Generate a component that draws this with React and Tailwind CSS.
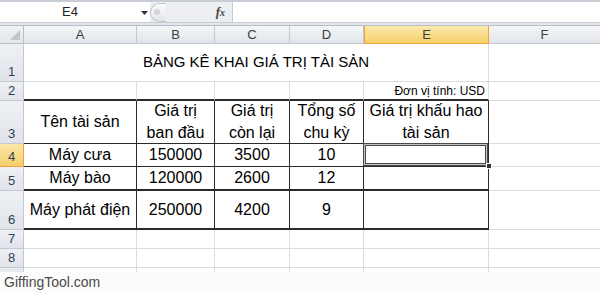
import React from 'react';

const grid = 'border-r border-b border-[#dadcdf]';
const colHead =
  'flex items-center justify-center border-r border-b border-[#c3c8cf] bg-gradient-to-b from-[#f4f6f8] to-[#e1e5ea] text-[13px] text-[#3c3c3c]';
const rowHead =
  'flex items-end justify-center pb-[1px] border-r border-b border-[#c3c8cf] bg-gradient-to-b from-[#eef1f4] to-[#e0e4e9] text-[13px] leading-[16px] text-[#30405a]';
const rowHeadSel =
  'flex items-end justify-center pb-[1px] border-r border-b border-[#f0a23e] bg-gradient-to-b from-[#fbe8aa] to-[#f6cf68] text-[13px] leading-[16px] text-[#30405a]';

function FormulaBar() {
  return (
    <div className="flex h-[23px] border-t-2 border-b border-[#c8cdd5]">
      <div className="relative flex w-[150px] items-center bg-white">
        <span className="w-[140px] text-center text-[13px] text-[#222]">E4</span>
        <svg width="7" height="4" viewBox="0 0 7 4" className="absolute left-[141px] top-[9px]">
          <path d="M0 0h7L3.5 4z" fill="#333" />
        </svg>
      </div>
      <div className="flex w-[82px] items-center bg-[#eceef1]">
        <div className="flex h-[19px] w-[16px] items-center justify-start rounded-l-full border border-r-0 border-[#c2c6cc] bg-gradient-to-b from-[#fafbfc] to-[#e3e6ea] pl-[3px]">
          <div className="h-[6px] w-[6px] rounded-full bg-[#d3d6da]" />
        </div>
        <span className="ml-auto mr-[7px] font-['Liberation_Serif',serif] text-[13px] font-bold italic text-[#444]">
          f<span className="text-[10px]">x</span>
        </span>
      </div>
      <div className="flex-1 border-l border-[#c8cdd5] bg-white" />
    </div>
  );
}

export default function App() {
  return (
    <div className="h-[293px] w-[600px] overflow-hidden bg-white font-['Liberation_Sans',Arial,sans-serif]">
      <FormulaBar />
      <div className="h-[3px] border-b border-[#b8bec7] bg-[#e3e7ec]" />

      <div className="grid grid-cols-[24px_113px_78px_75px_74px_125px_111px] grid-rows-[18px_38px_19px_43px_23px_24px_39px_19px_19px_4px] text-[16px] text-black">
        {/* header row */}
        <div className="relative border-r border-b border-[#b8bdc4] bg-gradient-to-b from-[#f1f3f5] to-[#e2e5e9]">
          <svg width="10" height="10" viewBox="0 0 10 10" className="absolute bottom-[3px] right-[3px]">
            <path d="M10 0v10H0z" fill="#c3c7cc" />
          </svg>
        </div>
        <div className={colHead}>A</div>
        <div className={colHead}>B</div>
        <div className={colHead}>C</div>
        <div className={colHead}>D</div>
        <div className="flex items-center justify-center border-x border-b border-[#f0a23e] bg-gradient-to-b from-[#fce9ac] to-[#f7d166] text-[13px] text-[#3c3c3c]">
          E
        </div>
        <div className="flex items-center justify-center border-b border-[#c3c8cf] bg-gradient-to-b from-[#f4f6f8] to-[#e1e5ea] text-[13px] text-[#3c3c3c]">
          F
        </div>

        {/* row 1 */}
        <div className={rowHead}>1</div>
        <div className={`col-span-5 flex items-center justify-center text-[15px] ${grid}`}>
          BẢNG KÊ KHAI GIÁ TRỊ TÀI SẢN
        </div>
        <div className="border-b border-[#dadcdf]" />

        {/* row 2 */}
        <div className={rowHead}>2</div>
        <div className="border-r border-b-2 border-r-[#dadcdf] border-b-[#2b2b2b]" />
        <div className="border-r border-b-2 border-r-[#dadcdf] border-b-[#2b2b2b]" />
        <div className="border-r border-b-2 border-r-[#dadcdf] border-b-[#2b2b2b]" />
        <div className="border-r border-b-2 border-r-[#dadcdf] border-b-[#2b2b2b]" />
        <div className="flex items-center justify-end border-r border-b-2 border-r-[#dadcdf] border-b-[#2b2b2b] pr-[3px] text-[12px]">
          Đơn vị tính: USD
        </div>
        <div className="border-b border-[#dadcdf]" />

        {/* row 3 */}
        <div className={rowHead}>3</div>
        <div className="flex items-center justify-center border-r border-b border-[#2b2b2b]">Tên tài sản</div>
        <div className="flex items-center justify-center border-r border-b border-[#2b2b2b] text-center leading-[22px]">
          Giá trị
          <br />
          ban đầu
        </div>
        <div className="flex items-center justify-center border-r border-b border-[#2b2b2b] text-center leading-[22px]">
          Giá trị
          <br />
          còn lại
        </div>
        <div className="flex items-center justify-center border-r border-b border-[#2b2b2b] text-center leading-[22px]">
          Tổng số
          <br />
          chu kỳ
        </div>
        <div className="flex items-center justify-center border-r border-b border-[#2b2b2b] text-center leading-[22px]">
          Giá trị khấu hao
          <br />
          tài sản
        </div>
        <div className="border-b border-[#dadcdf]" />

        {/* row 4 */}
        <div className={rowHeadSel}>4</div>
        <div className="flex items-center justify-center border-r border-b border-[#2b2b2b]">Máy cưa</div>
        <div className="flex items-center justify-center border-r border-b border-[#2b2b2b]">150000</div>
        <div className="flex items-center justify-center border-r border-b border-[#2b2b2b]">3500</div>
        <div className="flex items-center justify-center border-r border-b border-[#2b2b2b]">10</div>
        <div className="relative border-r border-b border-[#2b2b2b]">
          <div className="absolute -left-px -top-px bottom-0 right-0 z-10 border border-[#4a4a4a] shadow-[inset_0_0_0_1px_#c4c4c4,inset_0_0_0_2px_#4a4a4a]" />
          <div className="absolute -bottom-[3px] -right-[4px] z-20 h-[6px] w-[6px] border border-white bg-[#333]" />
        </div>
        <div className="border-b border-[#dadcdf]" />

        {/* row 5 */}
        <div className={rowHead}>5</div>
        <div className="flex items-center justify-center border-r border-b-2 border-[#2b2b2b]">Máy bào</div>
        <div className="flex items-center justify-center border-r border-b-2 border-[#2b2b2b]">120000</div>
        <div className="flex items-center justify-center border-r border-b-2 border-[#2b2b2b]">2600</div>
        <div className="flex items-center justify-center border-r border-b-2 border-[#2b2b2b]">12</div>
        <div className="border-r border-b-2 border-[#2b2b2b]" />
        <div className="border-b border-[#dadcdf]" />

        {/* row 6 */}
        <div className={rowHead}>6</div>
        <div className="flex items-center justify-center border-r border-b-2 border-[#2b2b2b] whitespace-nowrap">
          Máy phát điện
        </div>
        <div className="flex items-center justify-center border-r border-b-2 border-[#2b2b2b]">250000</div>
        <div className="flex items-center justify-center border-r border-b-2 border-[#2b2b2b]">4200</div>
        <div className="flex items-center justify-center border-r border-b-2 border-[#2b2b2b]">9</div>
        <div className="border-r border-b-2 border-[#2b2b2b]" />
        <div className="border-b border-[#dadcdf]" />

        {/* rows 7, 8 */}
        <div className={rowHead}>7</div>
        <div className={grid} />
        <div className={grid} />
        <div className={grid} />
        <div className={grid} />
        <div className={grid} />
        <div className="border-b border-[#dadcdf]" />

        <div className={rowHead}>8</div>
        <div className={grid} />
        <div className={grid} />
        <div className={grid} />
        <div className={grid} />
        <div className={grid} />
        <div className="border-b border-[#dadcdf]" />

        {/* partial row 9 */}
        <div className="border-r border-[#c3c8cf] bg-[#e6e9ed]" />
        <div className="border-r border-[#dadcdf]" />
        <div className="border-r border-[#dadcdf]" />
        <div className="border-r border-[#dadcdf]" />
        <div className="border-r border-[#dadcdf]" />
        <div className="border-r border-[#dadcdf]" />
        <div />
      </div>

      <div className="flex h-[21px] items-center bg-[#fcfcfc] pl-[4px] text-[14px] text-[#4a4a4a]">
        GiffingTool.com
      </div>
    </div>
  );
}
